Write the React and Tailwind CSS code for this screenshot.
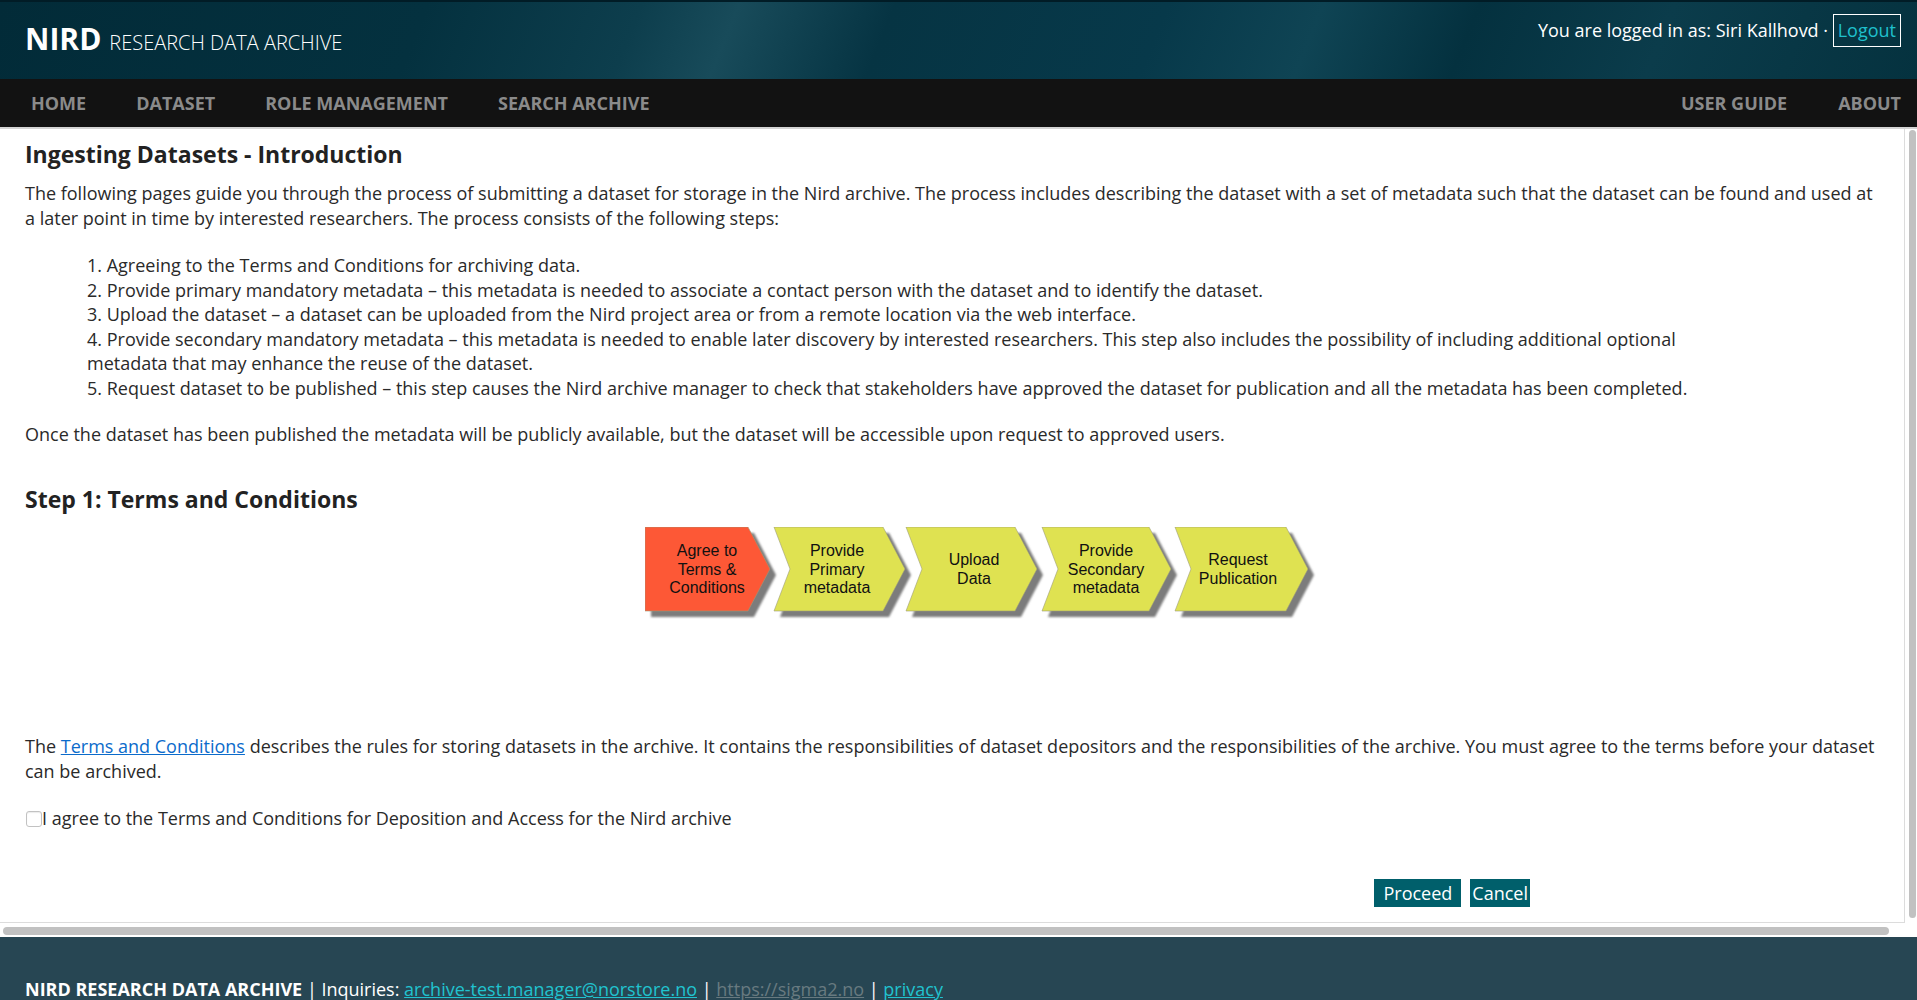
const steps = [
  { x: 0, w: 125, first: true, fill: "#fd5836", cx: 62, lines: ["Agree to", "Terms &", "Conditions"] },
  { x: 129, w: 131, fill: "#dfe251", cx: 192, lines: ["Provide", "Primary", "metadata"] },
  { x: 261, w: 131, fill: "#dfe251", cx: 329, lines: ["Upload", "Data"] },
  { x: 397, w: 129, fill: "#dfe251", cx: 461, lines: ["Provide", "Secondary", "metadata"] },
  { x: 530, w: 133, fill: "#dfe251", cx: 593, lines: ["Request", "Publication"] },
];

const chevronPath = (s, dx = 0, dy = 0) => {
  const L = s.x + dx;
  const T = 22;
  const N = 16;
  const H = 84;
  const right = L + s.w;
  let d = `M${L},${dy} H${right - T} L${right},${dy + H / 2} L${right - T},${dy + H} H${L}`;
  if (!s.first) d += ` L${L + N},${dy + H / 2}`;
  return d + " Z";
};

const Chevrons = () => (
  <svg width="685" height="96" viewBox="0 0 685 96">
    <defs>
      <filter id="soft" x="-10%" y="-10%" width="120%" height="130%">
        <feGaussianBlur stdDeviation="0.8" />
      </filter>
    </defs>
    {steps.map((s, i) => (
      <path key={"sh" + i} d={chevronPath(s, 6, 6)} fill="#7c7c7c" filter="url(#soft)" />
    ))}
    {steps.map((s, i) => {
      const start = 42 - ((s.lines.length - 1) * 18.5) / 2 + 5.5;
      return (
        <g key={i}>
          <path d={chevronPath(s)} fill={s.fill} stroke="#9c9c7a" strokeWidth="0.6" />
          {s.lines.map((t, j) => (
            <text
              key={j}
              x={s.cx}
              y={start + j * 18.5}
              textAnchor="middle"
              fontFamily="'Liberation Sans', Arial, sans-serif"
              fontSize="16"
              fill="#111"
            >
              {t}
            </text>
          ))}
        </g>
      );
    })}
  </svg>
);

const App = () => {
  return (
    <div className="min-h-screen bg-white font-['Open_Sans',sans-serif] text-[18px] leading-[1.362] text-[#2a2a2a]">
      {/* Header */}
      <header className="h-[79px] border-t-2 border-[#011c26] bg-[linear-gradient(112deg,#022b38_0%,#04313f_22%,#0d3e4d_33%,#184b5a_38%,#063443_46%,#07394a_60%,#0f4454_68%,#04313f_76%,#0b3c4b_86%,#05323f_100%)] flex items-start justify-between pl-[25px] pr-[16px]">
        <div className="flex items-baseline gap-[8px] pt-[22px] text-white">
          <span className="text-[30px] font-bold leading-none">NIRD</span>
          <span className="text-[20px] leading-none font-light">RESEARCH DATA ARCHIVE</span>
        </div>
        <div className="flex items-center pt-[12px] text-white">
          <span>You are logged in as: Siri Kallhovd ·&nbsp;</span>
          <a className="border border-white px-[4px] py-[3px] text-[#1fc0cd]">Logout</a>
        </div>
      </header>

      {/* Nav */}
      <nav className="h-[50px] bg-[#121212] border-b-2 border-[#d4d4d4] flex items-center justify-between font-bold text-[#8a8a8a] uppercase">
        <div className="flex gap-[50px] pl-[31px]">
          <span>Home</span>
          <span>Dataset</span>
          <span>Role Management</span>
          <span>Search Archive</span>
        </div>
        <div className="flex gap-[51px] pr-[16px]">
          <span>User Guide</span>
          <span>About</span>
        </div>
      </nav>

      {/* Scrolling panel */}
      <div className="flex">
        <div className="flex-1 h-[794px] overflow-hidden border-r border-b border-[#dcdcdc] px-[25px] pt-[10px]">
          <h2 className="text-[23px] font-bold text-[#222] mb-[11px]">Ingesting Datasets - Introduction</h2>
          <p>
            The following pages guide you through the process of submitting a dataset for storage in the Nird archive. The process
            includes describing the dataset with a set of metadata such that the dataset can be found and used at a later point in
            time by interested researchers. The process consists of the following steps:
          </p>

          <div className="mt-[23px] ml-[62px] w-[1630px]">
            <div>1. Agreeing to the Terms and Conditions for archiving data.</div>
            <div>
              2. Provide primary mandatory metadata – this metadata is needed to associate a contact person with the dataset and to
              identify the dataset.
            </div>
            <div>
              3. Upload the dataset – a dataset can be uploaded from the Nird project area or from a remote location via the web
              interface.
            </div>
            <div>
              4. Provide secondary mandatory metadata – this metadata is needed to enable later discovery by interested researchers.
              This step also includes the possibility of including additional optional metadata that may enhance the reuse of the
              dataset.
            </div>
            <div>
              5. Request dataset to be published – this step causes the Nird archive manager to check that stakeholders have approved
              the dataset for publication and all the metadata has been completed.
            </div>
          </div>

          <p className="mt-[22px]">
            Once the dataset has been published the metadata will be publicly available, but the dataset will be accessible upon
            request to approved users.
          </p>

          <h2 className="mt-[37px] text-[23px] font-bold text-[#222]">Step 1: Terms and Conditions</h2>

          <div className="mt-[12px] ml-[620px]">
            <Chevrons />
          </div>

          <p className="mt-[111px]">
            The <a className="text-[#0b6bcb] underline">Terms and Conditions</a> describes the rules for storing datasets in the
            archive. It contains the responsibilities of dataset depositors and the responsibilities of the archive. You must agree
            to the terms before your dataset can be archived.
          </p>

          <label className="mt-[23px] flex items-center">
            <span className="ml-[1px] w-[16px] h-[16px] border border-[#c2c2c2] rounded-[3px] bg-white shadow-[inset_0_1px_1px_rgba(0,0,0,0.08)]" />
            <span>I agree to the Terms and Conditions for Deposition and Access for the Nird archive</span>
          </label>

          <div className="mt-[48px] w-[1505px] flex justify-end gap-[9px] text-white">
            <button className="bg-[#005f6b] px-[9px] py-[2px]">Proceed</button>
            <button className="bg-[#005f6b] px-[2px] py-[2px]">Cancel</button>
          </div>
        </div>
        <div className="w-[12px] pt-[1px]">
          <div className="ml-[4px] w-[7px] h-[788px] rounded-full bg-[#c1c1c1]" />
        </div>
      </div>

      {/* Horizontal scrollbar */}
      <div className="h-[14px] pt-[4px] pl-[3px]">
        <div className="w-[1886px] h-[8px] rounded-full bg-[#c1c1c1]" />
      </div>

      {/* Footer */}
      <footer className="bg-[#274653] px-[25px] pt-[40px] pb-[40px] text-white">
        <span className="font-bold">NIRD RESEARCH DATA ARCHIVE</span> | Inquiries:{" "}
        <a className="text-[#21c3cf] underline">archive-test.manager@norstore.no</a> |{" "}
        <a className="text-[#687a80] underline">https://sigma2.no</a> | <a className="text-[#21c3cf] underline">privacy</a>
      </footer>
    </div>
  );
};

export default App;
